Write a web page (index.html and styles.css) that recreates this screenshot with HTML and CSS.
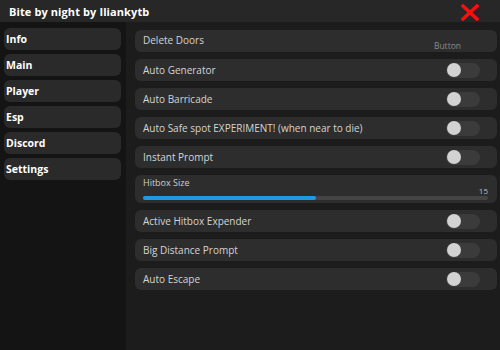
FILE: index.html
```html
<!DOCTYPE html>
<html lang="en">
<head>
    <meta charset="UTF-8">
    <title>Bite by night</title>
    <link rel="stylesheet" href="styles.css">
</head>
<body>
    <div class="window">
        <!-- Title bar -->
        <div class="titlebar">
            <span class="title">Bite by night by Iliankytb</span>
            <svg class="close" width="18" height="17" viewBox="0 0 18 17">
                <path d="M2 2 L16 15 M16 2 L2 15" stroke="#ff0d0d" stroke-width="3.4" stroke-linecap="square"/>
            </svg>
        </div>

        <div class="main">
            <!-- Tabs -->
            <div class="sidebar">
                <div class="tab">Info</div>
                <div class="tab">Main</div>
                <div class="tab">Player</div>
                <div class="tab">Esp</div>
                <div class="tab">Discord</div>
                <div class="tab">Settings</div>
            </div>

            <!-- Options -->
            <div class="content">
                <div class="row button-row">
                    <span>Delete Doors</span>
                    <span class="hint">Button</span>
                </div>
                <div class="row"><span>Auto Generator</span><div class="toggle"></div></div>
                <div class="row"><span>Auto Barricade</span><div class="toggle"></div></div>
                <div class="row"><span>Auto Safe spot EXPERIMENT! (when near to die)</span><div class="toggle"></div></div>
                <div class="row"><span>Instant Prompt</span><div class="toggle"></div></div>
                <div class="slider">
                    <div class="slider-label">Hitbox Size</div>
                    <div class="slider-value">15</div>
                    <div class="track"><div class="fill" style="width: 50%"></div></div>
                </div>
                <div class="row"><span>Active Hitbox Expender</span><div class="toggle"></div></div>
                <div class="row"><span>Big Distance Prompt</span><div class="toggle"></div></div>
                <div class="row"><span>Auto Escape</span><div class="toggle"></div></div>
            </div>
        </div>
    </div>
</body>
</html>
```

FILE: styles.css
```css
* {
    margin: 0;
    padding: 0;
    box-sizing: border-box;
}

body {
    font-family: 'Open Sans', 'DejaVu Sans', sans-serif;
    background: #1c1c1c;
    color: #d6d6d6;
    width: 500px;
    height: 350px;
    overflow: hidden;
}

.window {
    width: 500px;
    height: 350px;
    display: flex;
    flex-direction: column;
}

.titlebar {
    height: 22px;
    background: #272727;
    display: flex;
    align-items: center;
    padding-left: 9px;
}

.title {
    color: #ffffff;
    font-size: 11px;
    font-weight: 700;
    letter-spacing: 0.1px;
}

.close {
    margin-left: auto;
    margin-right: 21px;
    margin-top: 2px;
}

.main {
    flex: 1;
    display: flex;
}

.sidebar {
    width: 126px;
    background: #141414;
    padding: 6px 5px 0 4px;
    display: flex;
    flex-direction: column;
    gap: 4px;
}

.tab {
    height: 22px;
    background: #2a2a2a;
    border-radius: 6px;
    color: #ffffff;
    font-size: 10.5px;
    font-weight: 700;
    display: flex;
    align-items: center;
    padding-left: 2px;
}

.content {
    flex: 1;
    background: #1c1c1c;
    padding: 8px 3px 0 9px;
    display: flex;
    flex-direction: column;
    gap: 7px;
}

.row {
    height: 22px;
    background: #2d2d2d;
    border-radius: 6px;
    display: flex;
    align-items: center;
    justify-content: space-between;
    padding: 0 17px 0 8px;
    font-size: 10px;
    color: #d4d4d4;
}

.button-row {
    align-items: flex-start;
    padding-top: 3px;
    padding-right: 36px;
}

.hint {
    font-size: 8.5px;
    color: #8a8a8a;
    margin-top: 7px;
}

.toggle {
    width: 34px;
    height: 15px;
    background: #3b3b3b;
    border-radius: 8px;
    position: relative;
}

.toggle::after {
    content: '';
    position: absolute;
    left: 1px;
    top: 0.5px;
    width: 14px;
    height: 14px;
    border-radius: 50%;
    background: #d2d2d2;
}

.slider {
    height: 28px;
    background: #2d2d2d;
    border-radius: 6px;
    padding: 2px 9px 0 8px;
    display: flex;
    flex-direction: column;
}

.slider-label {
    font-size: 9px;
    color: #d0d0d0;
    line-height: 11px;
}

.slider-value {
    font-size: 8px;
    color: #bcbcbc;
    text-align: right;
    line-height: 8px;
    margin-top: -1px;
}

.track {
    height: 4px;
    background: #444444;
    border-radius: 2px;
    margin-top: 1px;
}

.fill {
    height: 100%;
    background: #1b9be6;
    border-radius: 2px;
}
```
